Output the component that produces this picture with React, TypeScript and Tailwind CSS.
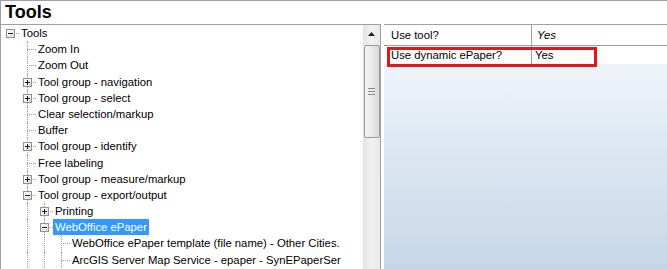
import React from 'react';

type Row = {
  text: string;
  level: number;
  exp?: '+' | '-';
  guides?: number[];
  last?: boolean;
  selected?: boolean;
};

const rows: Row[] = [
  { text: 'Tools', level: 0, exp: '-' },
  { text: 'Zoom In', level: 1 },
  { text: 'Zoom Out', level: 1 },
  { text: 'Tool group - navigation', level: 1, exp: '+' },
  { text: 'Tool group - select', level: 1, exp: '+' },
  { text: 'Clear selection/markup', level: 1 },
  { text: 'Buffer', level: 1 },
  { text: 'Tool group - identify', level: 1, exp: '+' },
  { text: 'Free labeling', level: 1 },
  { text: 'Tool group - measure/markup', level: 1, exp: '+' },
  { text: 'Tool group - export/output', level: 1, exp: '-' },
  { text: 'Printing', level: 2, exp: '+', guides: [1] },
  { text: 'WebOffice ePaper', level: 2, exp: '-', guides: [1], selected: true },
  { text: 'WebOffice ePaper template (file name) - Other Cities.', level: 3, guides: [1, 2] },
  { text: 'ArcGIS Server Map Service - epaper - SynEPaperSer', level: 3, guides: [1, 2] },
];

function Expander({ sign }: { sign: '+' | '-' }) {
  return (
    <div className="absolute left-[4px] top-[4px] w-[9px] h-[9px] border border-[#919191] bg-gradient-to-br from-white to-[#dcdcdc] z-10">
      <svg width="7" height="7" className="block">
        <rect x="1" y="3" width="5" height="1" fill="#1e1e1e" />
        {sign === '+' && <rect x="3" y="1" width="1" height="5" fill="#1e1e1e" />}
      </svg>
    </div>
  );
}

function TreeRow({ row }: { row: Row }) {
  const cells = [];
  for (let i = 0; i <= row.level; i++) {
    const isConnector = i === row.level;
    const guide = row.guides?.includes(i);
    cells.push(
      <div key={i} className="relative w-[17px] h-full shrink-0">
        {!isConnector && guide && (
          <div className="absolute left-[8px] top-0 bottom-0 border-l border-dotted border-[#a0a0a0]" />
        )}
        {isConnector && row.level > 0 && (
          <div
            className={
              row.last
                ? 'absolute left-[8px] top-0 h-[8px] border-l border-dotted border-[#a0a0a0]'
                : 'absolute left-[8px] top-0 bottom-0 border-l border-dotted border-[#a0a0a0]'
            }
          />
        )}
        {isConnector && (
          <div className="absolute left-[8px] right-0 top-[8px] border-t border-dotted border-[#a0a0a0]" />
        )}
        {isConnector && row.exp && <Expander sign={row.exp} />}
      </div>
    );
  }
  return (
    <div className="flex items-stretch h-[16.2px]">
      {cells}
      <span
        className={
          row.selected
            ? 'px-[2px] bg-[#3399ff] text-white whitespace-nowrap leading-[16.2px]'
            : 'px-[2px] text-black whitespace-nowrap leading-[16.2px]'
        }
      >
        {row.text}
      </span>
    </div>
  );
}

function ScrollBar() {
  return (
    <div className="w-[17px] shrink-0 bg-gradient-to-r from-[#e3e3e3] via-[#f1f1f1] to-[#e8e8e8] flex flex-col items-center">
      <div className="h-[18px] w-full flex items-center justify-center">
        <svg width="7" height="4">
          <path d="M3.5 0 L7 4 L0 4 Z" fill="#1f1f1f" />
        </svg>
      </div>
      <div className="mt-[2px] w-[16px] h-[93px] rounded-[2px] border border-[#9b9b9b] bg-gradient-to-r from-[#f4f4f4] via-[#e9e9e9] to-[#d9d9d9] flex flex-col items-center justify-center gap-[2px]">
        <div className="w-[7px] h-px bg-[#8d8d8d]" />
        <div className="w-[7px] h-px bg-[#8d8d8d]" />
        <div className="w-[7px] h-px bg-[#8d8d8d]" />
      </div>
    </div>
  );
}

export default function App() {
  return (
    <div
      className="relative w-[667px] h-[269px] overflow-hidden bg-white border-t border-l border-[#a0a0a0] flex flex-col"
      style={{ fontFamily: '"Liberation Sans", Arial, sans-serif' }}
    >
      <div className="h-[23px] pl-[4px] text-[18px] font-bold leading-[23px] text-black shrink-0">Tools</div>

      <div className="flex flex-1 min-h-0">
        <div className="w-[380px] shrink-0 border-t border-r border-[#a0a0a0] flex">
          <div className="flex-1 pl-[1px] text-[11.3px] overflow-hidden">
            {rows.map((r, i) => (
              <TreeRow key={i} row={r} />
            ))}
          </div>
          <ScrollBar />
        </div>

        <div className="flex-1 pl-[3px] flex flex-col text-[11.3px] text-black">
          <div className="border-t border-[#a0a0a0] bg-white">
            <div className="flex h-[21px] border-b border-[#a0a0a0]">
              <div className="w-[148px] border-r border-[#a0a0a0] pl-[7px] leading-[20px]">Use tool?</div>
              <div className="pl-[5px] leading-[20px] italic">Yes</div>
            </div>
            <div className="flex h-[18px]">
              <div className="w-[148px] border-r border-[#a0a0a0] pl-[7px] leading-[18px]">Use dynamic ePaper?</div>
              <div className="pl-[3px] leading-[18px]">Yes</div>
            </div>
          </div>
          <div className="flex-1 bg-gradient-to-b from-[#eff4fa] to-[#c6d6e8]" />
        </div>
      </div>

      <div className="absolute left-[386px] top-[46px] w-[210px] h-[20px] border-[3px] border-[#e8141b]" />
    </div>
  );
}
